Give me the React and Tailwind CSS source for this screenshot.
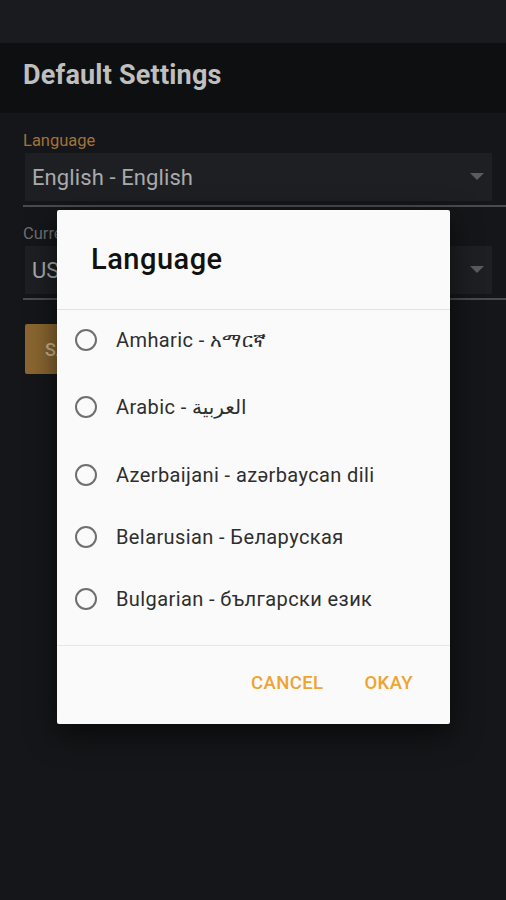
import React from 'react'

const languages = [
    { label: 'Amharic - አማርኛ', h: 'h-[60px]' },
    { label: 'Arabic - العربية', h: 'h-[74px]' },
    { label: 'Azerbaijani - azərbaycan dili', h: 'h-[62px]' },
    { label: 'Belarusian - Беларуская', h: 'h-[62px]' },
    { label: 'Bulgarian - български език', h: 'h-[62px]' },
]

function Caret() {
    return (
        <svg width="14" height="8" viewBox="0 0 14 8" className="shrink-0">
            <path d="M0 0 L14 0 L7 7 Z" fill="#5a5b5e" />
        </svg>
    )
}

function Select({ label, value, labelClass }) {
    return (
        <div className="flex flex-col">
            <span className={`text-[16.5px] leading-[18px] ${labelClass}`}>{label}</span>
            <div className="mt-[3px] ml-[2px] mr-[14px] h-[48px] bg-[#1e1f22] flex items-center justify-between pl-[7px] pr-[8px]">
                <span className="text-[22px] tracking-[0.1px] text-[#a9aaab]">{value}</span>
                <Caret />
            </div>
            <div className="mt-[4px] h-[2px] bg-[#4a4b4d]"></div>
        </div>
    )
}

export default function App() {
    return (
        <div className="relative w-[506px] h-[900px] overflow-hidden bg-[#151619] font-['Roboto','DejaVu_Sans','Noto_Sans',sans-serif]">
            <div className="h-[43px] bg-[#1a1b1e]"></div>
            <div className="h-[70px] bg-[#0e0f11] flex items-center px-[23px] pb-[6px]">
                <h1 className="text-[27px] font-bold text-[#bfbfbf] tracking-[0.2px]">Default Settings</h1>
            </div>

            <div className="pl-[23px] pt-[19px] flex flex-col gap-[18px]">
                <Select label="Language" value="English - English" labelClass="text-[#a0733a]" />
                <Select label="Currency" value="USD" labelClass="text-[#6d6e70]" />
                <div className="mt-[6px] ml-[2px] w-[120px] h-[50px] bg-[#8a6630] rounded-[2px] flex items-center pl-[20px]">
                    <span className="text-[18px] text-[#c9b48f] font-medium">SAVE</span>
                </div>
            </div>

            <div className="absolute top-[210px] left-[57px] w-[393px] h-[514px] bg-[#fafafa] rounded-[2px] shadow-[0_10px_30px_rgba(0,0,0,0.6)] flex flex-col">
                <div className="h-[99px] flex items-center pl-[34px]">
                    <h2 className="text-[29px] font-medium text-[#111] tracking-[0.5px]">Language</h2>
                </div>
                <div className="h-px bg-[#e2e2e2]"></div>
                <div className="flex flex-col pb-[15px]">
                    {languages.map((l) => (
                        <div key={l.label} className={`${l.h} flex items-center pl-[18px]`}>
                            <div className="w-[22px] h-[22px] rounded-full border-2 border-[#6f6f6f] shrink-0"></div>
                            <span className="ml-[19px] text-[20px] tracking-[0.4px] text-[#2e2e2e]">{l.label}</span>
                        </div>
                    ))}
                </div>
                <div className="h-px bg-[#e6e6e6]"></div>
                <div className="flex-1 flex items-center justify-end pr-[37px] pb-[3px] gap-[41px]">
                    <span className="text-[18.5px] font-medium text-[#eea332] tracking-[0.4px]">CANCEL</span>
                    <span className="text-[18.5px] font-medium text-[#eea332] tracking-[0.4px]">OKAY</span>
                </div>
            </div>
        </div>
    )
}
